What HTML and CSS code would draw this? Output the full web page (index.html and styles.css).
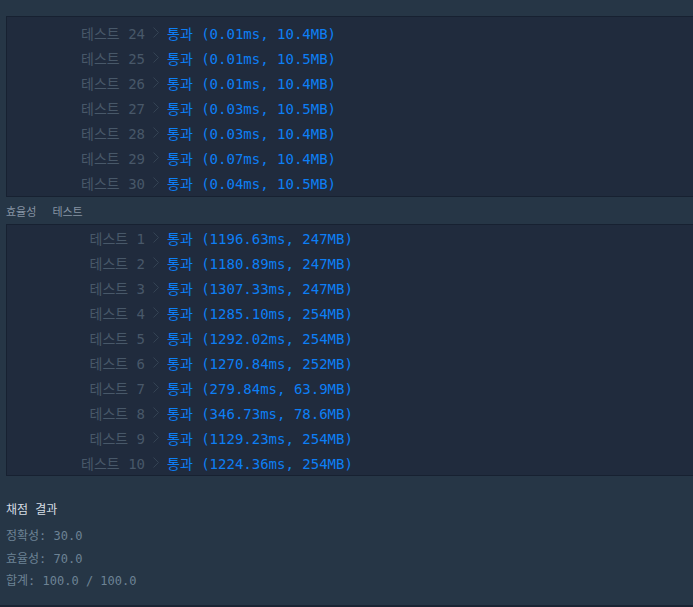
FILE: index.html
```html
<!DOCTYPE html>
<html lang="ko">
<head>
<meta charset="utf-8">
<link rel="stylesheet" href="styles.css">
</head>
<body>
<div class="page">
  <div class="box box-top">
    <div class="row"><span class="name">테스트 24</span><span class="chev"><svg width="6" height="11" viewBox="0 0 6 11"><path d="M0.5 0.5 L5.5 5.5 L0.5 10.5" fill="none" stroke="#344354" stroke-width="1"/></svg></span><span class="res">통과 (0.01ms, 10.4MB)</span></div>
    <div class="row"><span class="name">테스트 25</span><span class="chev"><svg width="6" height="11" viewBox="0 0 6 11"><path d="M0.5 0.5 L5.5 5.5 L0.5 10.5" fill="none" stroke="#344354" stroke-width="1"/></svg></span><span class="res">통과 (0.01ms, 10.5MB)</span></div>
    <div class="row"><span class="name">테스트 26</span><span class="chev"><svg width="6" height="11" viewBox="0 0 6 11"><path d="M0.5 0.5 L5.5 5.5 L0.5 10.5" fill="none" stroke="#344354" stroke-width="1"/></svg></span><span class="res">통과 (0.01ms, 10.4MB)</span></div>
    <div class="row"><span class="name">테스트 27</span><span class="chev"><svg width="6" height="11" viewBox="0 0 6 11"><path d="M0.5 0.5 L5.5 5.5 L0.5 10.5" fill="none" stroke="#344354" stroke-width="1"/></svg></span><span class="res">통과 (0.03ms, 10.5MB)</span></div>
    <div class="row"><span class="name">테스트 28</span><span class="chev"><svg width="6" height="11" viewBox="0 0 6 11"><path d="M0.5 0.5 L5.5 5.5 L0.5 10.5" fill="none" stroke="#344354" stroke-width="1"/></svg></span><span class="res">통과 (0.03ms, 10.4MB)</span></div>
    <div class="row"><span class="name">테스트 29</span><span class="chev"><svg width="6" height="11" viewBox="0 0 6 11"><path d="M0.5 0.5 L5.5 5.5 L0.5 10.5" fill="none" stroke="#344354" stroke-width="1"/></svg></span><span class="res">통과 (0.07ms, 10.4MB)</span></div>
    <div class="row"><span class="name">테스트 30</span><span class="chev"><svg width="6" height="11" viewBox="0 0 6 11"><path d="M0.5 0.5 L5.5 5.5 L0.5 10.5" fill="none" stroke="#344354" stroke-width="1"/></svg></span><span class="res">통과 (0.04ms, 10.5MB)</span></div>
  </div>
  <div class="section-label"><span>효율성</span><span>테스트</span></div>
  <div class="box box-eff">
    <div class="row"><span class="name">테스트 1</span><span class="chev"><svg width="6" height="11" viewBox="0 0 6 11"><path d="M0.5 0.5 L5.5 5.5 L0.5 10.5" fill="none" stroke="#344354" stroke-width="1"/></svg></span><span class="res">통과 (1196.63ms, 247MB)</span></div>
    <div class="row"><span class="name">테스트 2</span><span class="chev"><svg width="6" height="11" viewBox="0 0 6 11"><path d="M0.5 0.5 L5.5 5.5 L0.5 10.5" fill="none" stroke="#344354" stroke-width="1"/></svg></span><span class="res">통과 (1180.89ms, 247MB)</span></div>
    <div class="row"><span class="name">테스트 3</span><span class="chev"><svg width="6" height="11" viewBox="0 0 6 11"><path d="M0.5 0.5 L5.5 5.5 L0.5 10.5" fill="none" stroke="#344354" stroke-width="1"/></svg></span><span class="res">통과 (1307.33ms, 247MB)</span></div>
    <div class="row"><span class="name">테스트 4</span><span class="chev"><svg width="6" height="11" viewBox="0 0 6 11"><path d="M0.5 0.5 L5.5 5.5 L0.5 10.5" fill="none" stroke="#344354" stroke-width="1"/></svg></span><span class="res">통과 (1285.10ms, 254MB)</span></div>
    <div class="row"><span class="name">테스트 5</span><span class="chev"><svg width="6" height="11" viewBox="0 0 6 11"><path d="M0.5 0.5 L5.5 5.5 L0.5 10.5" fill="none" stroke="#344354" stroke-width="1"/></svg></span><span class="res">통과 (1292.02ms, 254MB)</span></div>
    <div class="row"><span class="name">테스트 6</span><span class="chev"><svg width="6" height="11" viewBox="0 0 6 11"><path d="M0.5 0.5 L5.5 5.5 L0.5 10.5" fill="none" stroke="#344354" stroke-width="1"/></svg></span><span class="res">통과 (1270.84ms, 252MB)</span></div>
    <div class="row"><span class="name">테스트 7</span><span class="chev"><svg width="6" height="11" viewBox="0 0 6 11"><path d="M0.5 0.5 L5.5 5.5 L0.5 10.5" fill="none" stroke="#344354" stroke-width="1"/></svg></span><span class="res">통과 (279.84ms, 63.9MB)</span></div>
    <div class="row"><span class="name">테스트 8</span><span class="chev"><svg width="6" height="11" viewBox="0 0 6 11"><path d="M0.5 0.5 L5.5 5.5 L0.5 10.5" fill="none" stroke="#344354" stroke-width="1"/></svg></span><span class="res">통과 (346.73ms, 78.6MB)</span></div>
    <div class="row"><span class="name">테스트 9</span><span class="chev"><svg width="6" height="11" viewBox="0 0 6 11"><path d="M0.5 0.5 L5.5 5.5 L0.5 10.5" fill="none" stroke="#344354" stroke-width="1"/></svg></span><span class="res">통과 (1129.23ms, 254MB)</span></div>
    <div class="row"><span class="name">테스트 10</span><span class="chev"><svg width="6" height="11" viewBox="0 0 6 11"><path d="M0.5 0.5 L5.5 5.5 L0.5 10.5" fill="none" stroke="#344354" stroke-width="1"/></svg></span><span class="res">통과 (1224.36ms, 254MB)</span></div>
  </div>
  <div class="summary">
    <div class="summary-title">채점 결과</div>
    <div class="summary-line">정확성: 30.0</div>
    <div class="summary-line">효율성: 70.0</div>
    <div class="summary-line">합계: 100.0 / 100.0</div>
  </div>
</div>
</body>
</html>
```
FILE: styles.css
```css
html, body {
  margin: 0;
  padding: 0;
  background: #263646;
}
.page {
  height: 607px;
  box-sizing: border-box;
  border-bottom: 2px solid #1a2433;
  padding-top: 16px;
  overflow: hidden;
  font-family: "DejaVu Sans Mono", "Noto Sans CJK KR", monospace;
}
.box {
  margin-left: 6px;
  margin-right: -10px;
  background: #202b3d;
  border: 1px solid #172131;
}
.box-top {
  padding-top: 3px;
  padding-bottom: 1px;
}
.row {
  display: flex;
  align-items: center;
  height: 25px;
  font-size: 14px;
  white-space: pre;
}
.name {
  width: 138px;
  text-align: right;
  color: #485869;
}
.chev {
  width: 22px;
  display: flex;
  justify-content: center;
  align-items: center;
}
.chev svg { display: block; }
.res {
  color: #0d7ff5;
}
.section-label {
  height: 27px;
  display: flex;
  align-items: center;
  gap: 16px;
  padding-left: 6px;
  font-size: 11px;
  line-height: 24px;
  color: #8593a3;
  font-family: "Noto Sans CJK KR", sans-serif;
}
.summary {
  padding: 24px 6px 0;
  font-size: 12px;
}
.summary-title {
  color: #d5dce3;
  font-size: 12px;
  height: 20px;
  line-height: 20px;
  margin-bottom: 5px;
}
.summary-line {
  color: #6d8395;
  height: 22.5px;
  line-height: 22.5px;
}
```
